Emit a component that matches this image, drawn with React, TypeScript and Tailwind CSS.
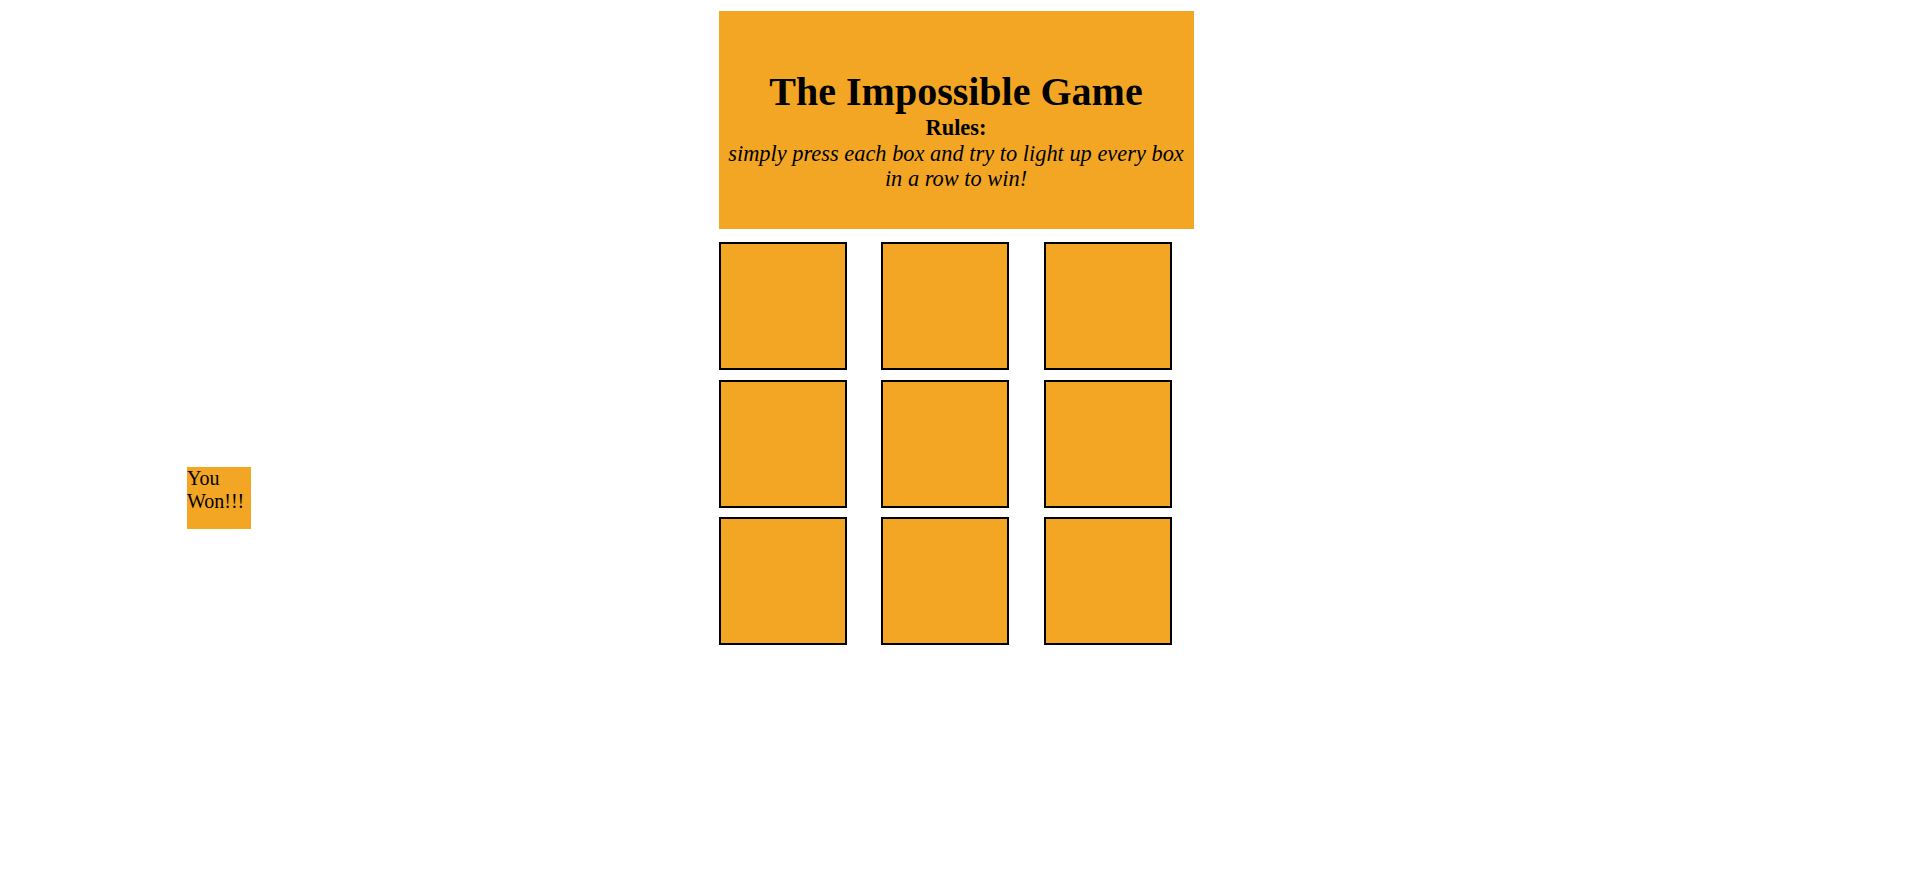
const boxes = Array.from({ length: 9 }, (_, i) => i);

export default function App() {
  return (
    <div
      className="relative min-h-[882px] w-full bg-white text-black"
      style={{ fontFamily: '"Liberation Serif", "Times New Roman", serif' }}
    >
      {/* Win message */}
      <div className="absolute left-[187px] top-[467px] h-[62px] w-[64px] bg-[#f3a623] text-[20px] leading-[23px]">
        You Won!!!
      </div>

      <div className="mx-auto w-[475px] pt-[11px]">
        {/* Header */}
        <div className="flex h-[218px] flex-col items-center bg-[#f3a623] pt-[58px] text-center">
          <h1 className="text-[40px] font-bold leading-[46px]">The Impossible Game</h1>
          <h3 className="text-[22.4px] font-bold leading-[25.5px]">Rules:</h3>
          <p className="text-[22.4px] italic leading-[25.5px]">
            simply press each box and try to light up every box in a row to win!
          </p>
        </div>

        {/* Board */}
        <div className="mt-[13px] grid grid-cols-[128px_128px_128px] gap-x-[34.5px] gap-y-[9.5px]">
          {boxes.map((b) => (
            <button
              key={b}
              className="h-[128px] w-[128px] border-2 border-black bg-[#f3a623]"
            />
          ))}
        </div>
      </div>
    </div>
  );
}
